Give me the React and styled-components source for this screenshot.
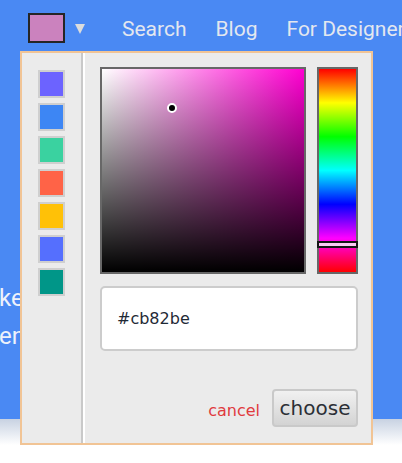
import React from "react";
import styled, { createGlobalStyle } from "styled-components";

const Global = createGlobalStyle`
  html, body { margin: 0; padding: 0; background: #fff; }
  body { font-family: Roboto, "Noto Sans", sans-serif; overflow: hidden; }
  * { box-sizing: border-box; }
`;

const Page = styled.div`
  position: relative;
  width: 402px;
  height: 463px;
  overflow: hidden;
`;

const Blue = styled.div`
  background: #4a89f3;
  height: 419px;
  overflow: hidden;
`;

const Fade = styled.div`
  height: 26px;
  background: linear-gradient(#c8d2e2, #ffffff);
`;

const Header = styled.div`
  display: flex;
  align-items: center;
  padding: 13px 0 0 28px;
  height: 43px;
  white-space: nowrap;
`;

const CurrentSwatch = styled.div`
  width: 37px;
  height: 30px;
  border: 2px solid #252525;
  background: ${(p) => p.$color};
  flex: none;
`;

const Caret = styled.div`
  width: 0;
  height: 0;
  margin-left: 10px;
  margin-top: 1px;
  border-left: 5.5px solid transparent;
  border-right: 5.5px solid transparent;
  border-top: 10px solid #dcdcdc;
  flex: none;
`;

const Nav = styled.nav`
  display: flex;
  gap: 29px;
  margin-left: 37px;
`;

const NavLink = styled.span`
  font-family: Roboto, sans-serif;
  font-size: 21px;
  color: #e3e7ef;
  padding-top: 2px;
`;

const Hero = styled.div`
  margin-top: 236px;
  margin-left: -1px;
`;

const HeroLine = styled.div`
  font-family: Roboto, sans-serif;
  font-size: 24px;
  line-height: 38px;
  color: #eef2fb;
  white-space: nowrap;
`;

const Popup = styled.div`
  position: absolute;
  top: 51px;
  left: 20px;
  width: 353px;
  height: 394px;
  border: 2px solid #f1c495;
  display: flex;
  background: #ebebeb;
`;

const SwatchColumn = styled.div`
  width: 61px;
  flex: none;
  border-right: 2px solid #c9c9c9;
  padding-top: 17px;
  display: flex;
  flex-direction: column;
  align-items: center;
  gap: 5px;
`;

const Swatch = styled.div`
  width: 27px;
  height: 28px;
  border: 2px solid #cfcfcf;
  background: ${(p) => p.$color};
`;

const Main = styled.div`
  flex: 1;
  border-left: 2px solid #ffffff;
  padding: 14px 13px 16px 15px;
  display: flex;
  flex-direction: column;
`;

const PickerRow = styled.div`
  display: flex;
  gap: 11px;
  height: 207px;
`;

const SatBox = styled.div`
  position: relative;
  width: 206px;
  height: 207px;
  border: 2px solid #676767;
  background: linear-gradient(to top, #000, rgba(0, 0, 0, 0)),
    linear-gradient(to right, #fff, ${(p) => p.$hue});
`;

const Dot = styled.div`
  position: absolute;
  width: 10px;
  height: 10px;
  margin: -5px 0 0 -5px;
  border-radius: 50%;
  background: #000;
  border: 2px solid #fff;
`;

const HueBar = styled.div`
  position: relative;
  width: 41px;
  height: 207px;
  border: 2px solid #676767;
  background: linear-gradient(
    to bottom,
    #ff0000 0%,
    #ffff00 16.67%,
    #00ff00 33.33%,
    #00ffff 50%,
    #0000ff 66.67%,
    #ff00ff 83.33%,
    #ff0000 100%
  );
`;

const HueMarker = styled.div`
  position: absolute;
  left: -2px;
  right: -2px;
  height: 7px;
  border: 2px solid #161616;
  background: #fbcaf3;
`;

const HexInput = styled.input`
  margin-top: 12px;
  height: 65px;
  width: 100%;
  border: 2px solid #cccccc;
  border-radius: 5px;
  background: #fff;
  padding: 0 15px;
  font-family: "DejaVu Sans", sans-serif;
  font-size: 16px;
  color: #1f2a36;
  outline: none;
`;

const Actions = styled.div`
  margin-top: auto;
  display: flex;
  justify-content: flex-end;
  align-items: center;
  gap: 12px;
`;

const CancelLink = styled.span`
  font-family: "DejaVu Sans", sans-serif;
  font-size: 16px;
  color: #e03a3e;
  padding-top: 4px;
`;

const ChooseButton = styled.button`
  width: 86px;
  height: 38px;
  border: 2px solid #c9c9c9;
  border-radius: 4px;
  background: linear-gradient(#f1f1f1, #d3d3d3);
  font-family: "DejaVu Sans", sans-serif;
  font-size: 20px;
  color: #2b2f36;
  padding: 0;
  line-height: 1;
`;

const palette = ["#6c63ff", "#3d86f4", "#3ad2a0", "#ff6347", "#ffc107", "#556ffe", "#009688"];

function hexToHsv(hex) {
  const r = parseInt(hex.slice(1, 3), 16) / 255;
  const g = parseInt(hex.slice(3, 5), 16) / 255;
  const b = parseInt(hex.slice(5, 7), 16) / 255;
  const max = Math.max(r, g, b);
  const min = Math.min(r, g, b);
  const d = max - min;
  let h = 0;
  if (d) {
    if (max === r) h = ((g - b) / d) % 6;
    else if (max === g) h = (b - r) / d + 2;
    else h = (r - g) / d + 4;
    h *= 60;
    if (h < 0) h += 360;
  }
  return { h, s: max ? d / max : 0, v: max };
}

export default function App() {
  const color = "#cb82be";
  const { h } = hexToHsv(color);
  const hueTop = (h / 360) * 203 - 3.5;
  return (
    <Page>
      <Global />
      <Blue>
        <Header>
          <CurrentSwatch $color={color} />
          <Caret />
          <Nav>
            <NavLink>Search</NavLink>
            <NavLink>Blog</NavLink>
            <NavLink>For Designers</NavLink>
          </Nav>
        </Header>
        <Hero>
          <HeroLine>ke colors</HeroLine>
          <HeroLine>en palettes</HeroLine>
        </Hero>
      </Blue>
      <Fade />
      <Popup>
        <SwatchColumn>
          {palette.map((c) => (
            <Swatch key={c} $color={c} />
          ))}
        </SwatchColumn>
        <Main>
          <PickerRow>
            <SatBox $hue={`hsl(${h}, 100%, 50%)`}>
              <Dot style={{ left: 70, top: 39 }} />
            </SatBox>
            <HueBar>
              <HueMarker style={{ top: hueTop }} />
            </HueBar>
          </PickerRow>
          <HexInput readOnly value={color} />
          <Actions>
            <CancelLink>cancel</CancelLink>
            <ChooseButton>choose</ChooseButton>
          </Actions>
        </Main>
      </Popup>
    </Page>
  );
}
